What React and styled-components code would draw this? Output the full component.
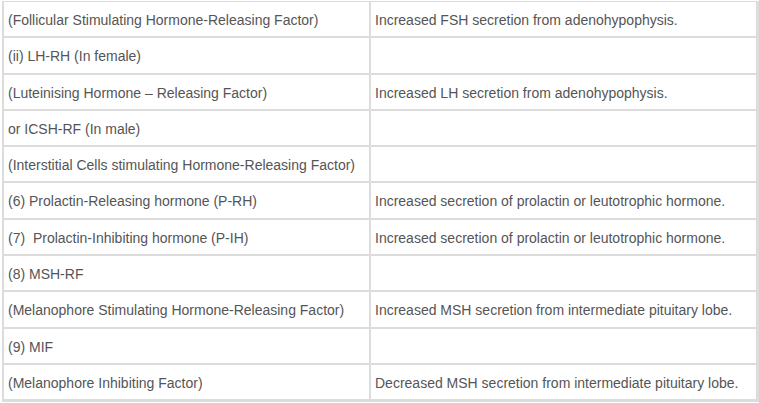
import React from "react";
import styled, { createGlobalStyle } from "styled-components";

const GlobalStyle = createGlobalStyle`
    html, body {
        margin: 0;
        padding: 0;
        background: #ffffff;
    }
`;

const Page = styled.div`
    padding: 1px 0 0 2px;
    font-family: "Liberation Sans", Arial, sans-serif;
`;

const Table = styled.table`
    width: 757px;
    table-layout: fixed;
    border-collapse: separate;
    border-spacing: 0;
    border-left: 1px solid #dcdcdc;
    border-right: 2px solid #dcdcdc;
    border-bottom: 2px solid #dcdcdc;
`;

const Cell = styled.td`
    width: ${(p) => (p.$first ? "357px" : "auto")};
    padding: 9px 4px 7px;
    border: 1px solid #dcdcdc;
    color: #555555;
    font-size: 14px;
    line-height: 18.3px;
    vertical-align: middle;
    white-space: nowrap;
`;

const rows = [
    ["(Follicular Stimulating Hormone-Releasing Factor)", "Increased FSH secretion from adenohypophysis."],
    ["(ii) LH-RH (In female)", ""],
    ["(Luteinising Hormone \u2013 Releasing Factor)", "Increased LH secretion from adenohypophysis."],
    ["or ICSH-RF (In male)", ""],
    ["(Interstitial Cells stimulating Hormone-Releasing Factor)", ""],
    ["(6) Prolactin-Releasing hormone (P-RH)", "Increased secretion of prolactin or leutotrophic hormone."],
    ["(7)\u00a0 Prolactin-Inhibiting hormone (P-IH)", "Increased secretion of prolactin or leutotrophic hormone."],
    ["(8) MSH-RF", ""],
    ["(Melanophore Stimulating Hormone-Releasing Factor)", "Increased MSH secretion from intermediate pituitary lobe."],
    ["(9) MIF", ""],
    ["(Melanophore Inhibiting Factor)", "Decreased MSH secretion from intermediate pituitary lobe."],
];

const App = () => {
    return (
        <Page>
            <GlobalStyle />
            <Table>
                <tbody>
                    {rows.map((r, i) => (
                        <tr key={i}>
                            <Cell $first>{r[0]}</Cell>
                            <Cell>{r[1]}</Cell>
                        </tr>
                    ))}
                </tbody>
            </Table>
        </Page>
    );
};

export default App;
